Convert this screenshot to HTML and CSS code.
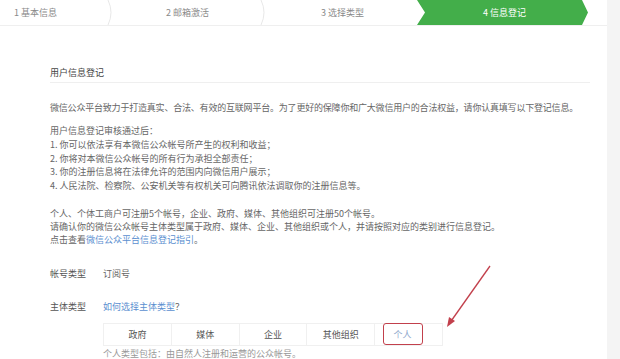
FILE: index.html
```html
<!DOCTYPE html>
<html lang="zh">
<head>
<meta charset="utf-8">
<link rel="stylesheet" href="styles.css">
</head>
<body>
<div class="page">
  <div class="main">
    <div class="steps">
      <div class="step step-first"><span class="step-label">1 基本信息</span><svg class="sep" width="8" height="25" viewBox="0 0 8 25"><path d="M1 0 Q7 12.5 1 25" fill="none" stroke="#e8e8e8" stroke-width="1"/></svg></div>
      <div class="step step-mid"><span class="step-label">2 邮箱激活</span><svg class="sep" width="8" height="25" viewBox="0 0 8 25"><path d="M1 0 Q7 12.5 1 25" fill="none" stroke="#e8e8e8" stroke-width="1"/></svg></div>
      <div class="step step-third"><span class="step-label">3 选择类型</span></div>
      <div class="step step-active"><span class="step-label">4 信息登记</span></div>
    </div>
    <div class="content">
      <div class="title">用户信息登记</div>
      <p class="intro">微信公众平台致力于打造真实、合法、有效的互联网平台。为了更好的保障你和广大微信用户的合法权益，请你认真填写以下登记信息。</p>
      <div class="rules">
        <div>用户信息登记审核通过后：</div>
        <div>1. 你可以依法享有本微信公众帐号所产生的权利和收益；</div>
        <div>2. 你将对本微信公众帐号的所有行为承担全部责任；</div>
        <div>3. 你的注册信息将在法律允许的范围内向微信用户展示；</div>
        <div>4. 人民法院、检察院、公安机关等有权机关可向腾讯依法调取你的注册信息等。</div>
      </div>
      <div class="notes">
        <div>个人、个体工商户可注册5个帐号，企业、政府、媒体、其他组织可注册50个帐号。</div>
        <div>请确认你的微信公众帐号主体类型属于政府、媒体、企业、其他组织或个人，并请按照对应的类别进行信息登记。</div>
        <div>点击查看<span class="link">微信公众平台信息登记指引</span>。</div>
      </div>
      <div class="field field-account"><span class="label">帐号类型</span><span class="value">订阅号</span></div>
      <div class="field field-subject"><span class="label">主体类型</span><span class="value"><span class="link">如何选择主体类型</span>？</span></div>
      <div class="tabs">
        <div class="tab">政府</div>
        <div class="tab">媒体</div>
        <div class="tab">企业</div>
        <div class="tab">其他组织</div>
        <div class="tab tab-selected"><span class="mark">个人</span></div>
      </div>
      <div class="note">个人类型包括：由自然人注册和运营的公众帐号。</div>
    </div>
  </div>
  <div class="side"></div>
  <svg class="arrow" width="60" height="70" viewBox="0 0 60 70">
    <line x1="50" y1="5" x2="9" y2="63" stroke="#c2404c" stroke-width="1.3"/>
    <path d="M7 66 L9 56 L15 60 Z" fill="#c2404c"/>
  </svg>
</div>
</body>
</html>
```

FILE: styles.css
```css
* { box-sizing: border-box; }
html, body { margin: 0; padding: 0; }
body {
  width: 620px;
  height: 359px;
  overflow: hidden;
  background: #fff;
  font-family: "Noto Sans CJK SC", "Microsoft YaHei", sans-serif;
  font-size: 9px;
  color: #666;
}
.page {
  position: relative;
  display: flex;
  width: 620px;
  height: 359px;
}
.main {
  width: 607px;
  background: #fff;
}
.side {
  flex: 1;
  background: #f4f4f4;
}
.steps {
  display: flex;
  height: 26px;
  border-bottom: 1px solid #efefef;
}
.step {
  display: flex;
  align-items: center;
  height: 25px;
  color: #8a8a8a;
}
.step-label { flex: 1; text-align: center; line-height: 25px; }
.sep { flex: none; }
.step-first { width: 115px; }
.step-first .step-label { text-align: left; padding-left: 14px; }
.step-mid { width: 153px; }
.step-third { width: 149px; }
.step-active {
  width: 171px;
  background: #43ae4a;
  color: #fff;
  clip-path: polygon(0 0, 165px 0, 171px 12.5px, 165px 25px, 0 25px, 8px 12.5px);
}
.step-active .step-label { padding-left: 4px; }
.content {
  padding: 40px 17px 0 50px;
}
.title {
  color: #444;
  line-height: 13px;
  padding-bottom: 3px;
  border-bottom: 1px solid #efefef;
}
.intro {
  margin: 18px 0 0;
  line-height: 13px;
  white-space: nowrap;
  letter-spacing: -0.2px;
}
.rules {
  margin-top: 10px;
  line-height: 13.75px;
}
.notes {
  margin-top: 14px;
  line-height: 13px;
}
.link { color: #5b8fd0; }
.field {
  display: flex;
  line-height: 13px;
}
.field-account { margin-top: 21px; }
.field-subject { margin-top: 20px; }
.label { width: 53px; color: #555; }
.value { color: #666; }
.tabs {
  display: flex;
  margin: 10px 0 0 53px;
  width: 340px;
  height: 23px;
  border: 1px solid #f0f0f0;
}
.tab {
  flex: 1;
  display: flex;
  align-items: center;
  justify-content: center;
  color: #555;
  border-right: 1px solid #f0f0f0;
}
.tab:last-child { border-right: none; }
.tab-selected { color: #8fa8cc; }
.mark {
  display: flex;
  align-items: center;
  justify-content: center;
  width: 40px;
  height: 22px;
  margin-right: 12px;
  border: 1.5px solid #c2404c;
  border-radius: 3px;
}
.note {
  margin-top: 1px;
  margin-left: 53px;
  line-height: 13px;
  color: #999;
}
.arrow {
  position: absolute;
  left: 440px;
  top: 261px;
}
```
